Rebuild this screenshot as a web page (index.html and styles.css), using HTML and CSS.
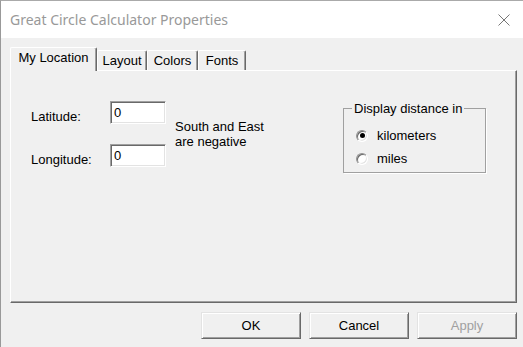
FILE: index.html
```html
<!DOCTYPE html>
<html lang="en">
<head>
    <meta charset="UTF-8">
    <title>Great Circle Calculator Properties</title>
    <link rel="stylesheet" href="styles.css">
</head>
<body>

<div class="window">
    <div class="titlebar">
        <span class="title">Great Circle Calculator Properties</span>
        <svg class="close" width="12" height="12" viewBox="0 0 12 12">
            <path d="M0.5 0.5 L11.5 11.5 M11.5 0.5 L0.5 11.5" stroke="#777" stroke-width="1" fill="none"/>
        </svg>
    </div>

    <div class="dialog">
        <div class="tabs">
            <div class="tab active">My Location</div>
            <div class="tab tab-layout">Layout</div>
            <div class="tab tab-colors">Colors</div>
            <div class="tab tab-fonts">Fonts</div>
        </div>

        <div class="panel">
            <div class="coords">
                <label for="latitude">Latitude:</label>
                <input type="text" id="latitude" value="0">
                <label for="longitude">Longitude:</label>
                <input type="text" id="longitude" value="0">
            </div>

            <div class="note">South and East<br>are negative</div>

            <fieldset class="group">
                <legend>Display distance in</legend>
                <div class="radio-row"><span class="radio checked"></span>kilometers</div>
                <div class="radio-row"><span class="radio"></span>miles</div>
            </fieldset>
        </div>

        <div class="buttons">
            <button>OK</button>
            <button>Cancel</button>
            <button disabled>Apply</button>
        </div>
    </div>
</div>

</body>
</html>
```

FILE: styles.css
```css
* {
    margin: 0;
    padding: 0;
    box-sizing: border-box;
}

body {
    font-family: "Liberation Sans", Arial, sans-serif;
    font-size: 13px;
    background-color: #f0f0f0;
    color: #000;
}

.window {
    width: 523px;
    height: 347px;
    border-top: 1px solid #aaa;
    border-left: 1px solid #999;
    background-color: #f0f0f0;
    overflow: hidden;
}

.titlebar {
    height: 37px;
    background-color: #fff;
    display: flex;
    align-items: center;
    justify-content: space-between;
    padding: 0 13px 0 9px;
}

.title {
    font-family: "Noto Sans", sans-serif;
    font-size: 14px;
    color: #999;
}

.close {
    display: block;
}

.dialog {
    padding: 9px 6px 0 9px;
}

/* tab strip */
.tabs {
    display: flex;
    align-items: flex-end;
    height: 23px;
}

.tab {
    height: 20px;
    line-height: 19px;
    text-align: center;
    border-top: 1px solid #fff;
    border-left: 1px solid #fff;
    border-right: 1px solid #696969;
    box-shadow: inset -1px 0 0 #a0a0a0;
    border-radius: 2px 2px 0 0;
    background-color: #f0f0f0;
}

.tab.active {
    width: 87px;
    height: 24px;
    line-height: 20px;
    margin-bottom: -1px;
    position: relative;
    z-index: 1;
}

.tab-layout {
    width: 50px;
}

.tab-colors {
    width: 51px;
}

.tab-fonts {
    width: 48px;
}

/* page body */
.panel {
    display: flex;
    align-items: flex-start;
    height: 233px;
    padding: 30px 30px 0 20px;
    border-top: 1px solid #fff;
    border-left: 1px solid #fff;
    border-right: 1px solid #696969;
    border-bottom: 1px solid #696969;
    box-shadow: inset -1px -1px 0 #a0a0a0;
}

.coords {
    display: grid;
    grid-template-columns: 79px 56px;
    grid-auto-rows: 23px;
    row-gap: 20px;
}

.coords label {
    padding-top: 8px;
    line-height: 15px;
}

.coords input {
    width: 56px;
    height: 23px;
    font-family: "Liberation Sans", Arial, sans-serif;
    font-size: 13px;
    padding: 0 3px;
    background-color: #fff;
    border: 1px solid;
    border-color: #a0a0a0 #fff #fff #a0a0a0;
    box-shadow: inset 1px 1px 0 #696969, inset -1px -1px 0 #e3e3e3;
    outline: none;
}

.note {
    margin: 18px 0 0 9px;
    line-height: 15px;
}

.group {
    width: 143px;
    margin-left: auto;
    padding: 8px 8px 2px 8px;
    border: 1px solid #a0a0a0;
    box-shadow: 1px 1px 0 #fff;
}

.group legend {
    padding: 0 2px;
    line-height: 15px;
}

.radio-row {
    display: flex;
    align-items: center;
    height: 23px;
    padding-left: 4px;
}

.radio {
    width: 12px;
    height: 12px;
    margin-right: 9px;
    border-radius: 50%;
    border: 1px solid;
    border-color: #909090 #fff #fff #909090;
    box-shadow: inset 1px 1px 0 #696969, inset -1px -1px 0 #e3e3e3;
    background-color: #fff;
    display: flex;
    align-items: center;
    justify-content: center;
}

.radio.checked::after {
    content: "";
    width: 5px;
    height: 5px;
    border-radius: 50%;
    background-color: #000;
}

/* bottom buttons */
.buttons {
    display: flex;
    justify-content: flex-end;
    gap: 8px;
    margin-top: 9px;
}

button {
    width: 100px;
    height: 27px;
    font-family: "Liberation Sans", Arial, sans-serif;
    font-size: 13px;
    color: #000;
    background-color: #f0f0f0;
    border: 1px solid;
    border-color: #e3e3e3 #696969 #696969 #e3e3e3;
    box-shadow: inset 1px 1px 0 #fff, inset -1px -1px 0 #a0a0a0;
}

button:disabled {
    color: #a0a0a0;
}
```
